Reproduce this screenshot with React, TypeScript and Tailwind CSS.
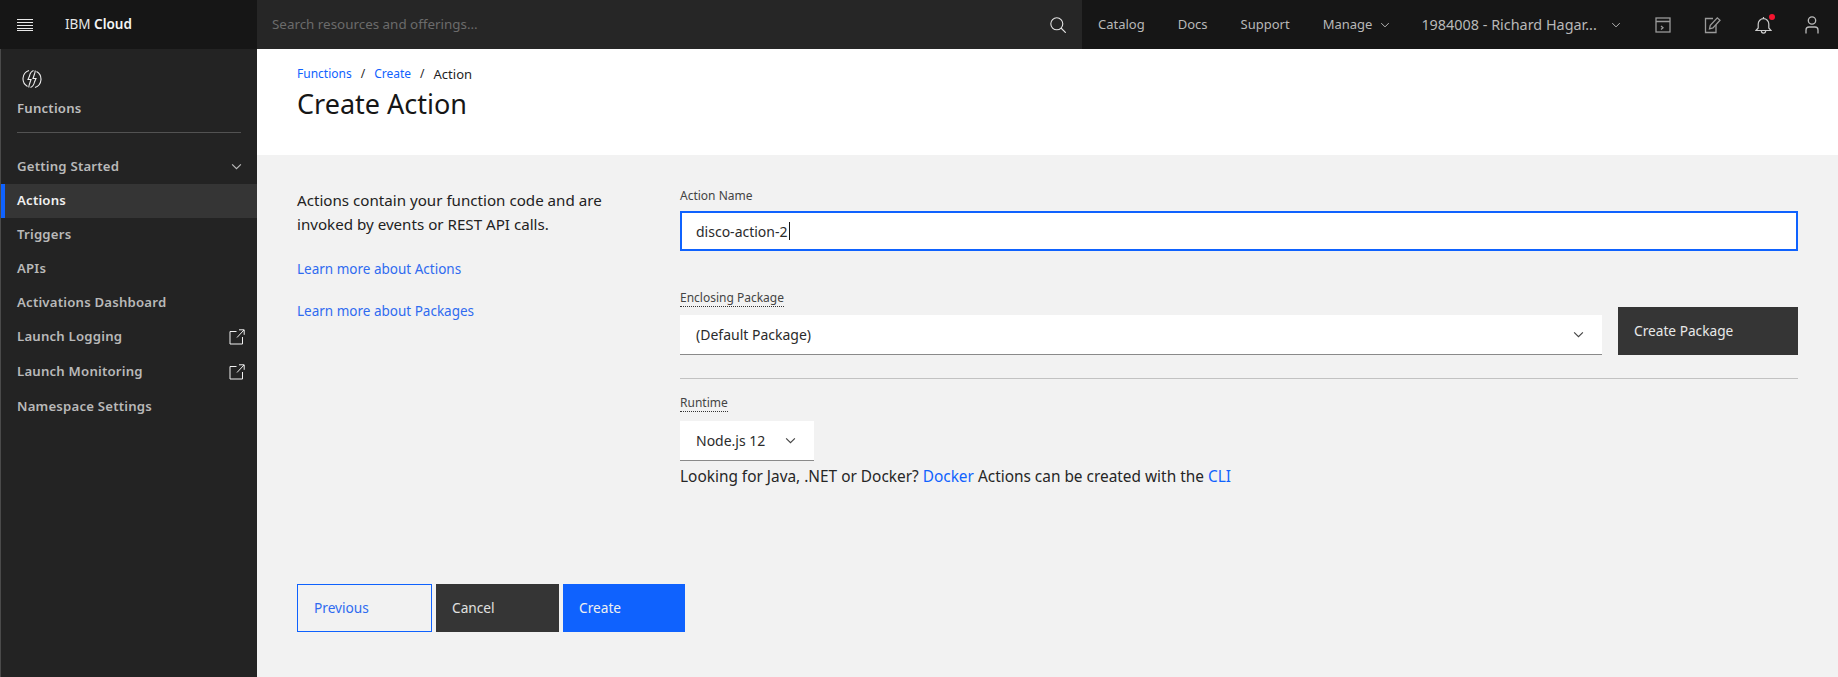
const font = "font-['Noto_Sans','Open_Sans',sans-serif]";

function Chevron({ className = "" }: { className?: string }) {
  return (
    <svg viewBox="0 0 12 8" fill="none" stroke="currentColor" strokeWidth="1.300" className={className}>
      <path d="M1 1.500l5 5 5-5" />
    </svg>
  );
}

function ExternalLink() {
  return (
    <svg viewBox="0 0 16 16" fill="none" stroke="#f0f0f0" strokeWidth="1" className="w-[16px] h-[16px]">
      <path d="M7.500 2.500h-6.500v12.500h12.500v-7" />
      <path d="M8 8.500l7-7.500M10 .8h5.200v5" />
    </svg>
  );
}

function FunctionsLogo() {
  return (
    <svg viewBox="0 0 20 20" fill="none" stroke="#eeeeee" strokeWidth="1.100" className="w-[20px] h-[20px]">
      <path d="M7 1.500A8.800 8.800 0 0 0 5.500 17.500" />
      <path d="M13 18.500A8.800 8.800 0 0 0 14.500 2.500" />
      <path d="M11.500 1.500C9 2.500 8 4.500 7.500 7L6 10.500h3L7.500 15c-.5 1.500-1 2.500-.5 3.500" />
      <path d="M13 1.500c.5 1 0 2-.5 3.500L11 9.500h3l-1.500 3.500c-.5 2.500-1.500 4.500-4 5.500" />
    </svg>
  );
}

function SideItem({ label, active, external, chevron }: { label: string; active?: boolean; external?: boolean; chevron?: boolean }) {
  return (
    <div
      className={`relative flex items-center justify-between pl-[16px] pr-[12px] text-[13.2px] font-semibold tracking-[0.2px] ${
        external ? "h-[35px]" : "h-[34px]"
      } ${active ? "bg-[#353535] text-[#f0f0f0]" : "text-[#b9b9b9]"}`}
    >
      {active && <span className="absolute left-0 top-0 bottom-0 w-[4px] bg-[#0f62fe]" />}
      <span>{label}</span>
      {chevron && <Chevron className="w-[11px] h-[7px] mr-[3px] text-[#bbbbbb]" />}
      {external && <ExternalLink />}
    </div>
  );
}

function Sidebar() {
  return (
    <aside className="w-[257px] shrink-0 bg-[#232323] border-l border-[#4a4a4a]">
      <div className="pl-[21px] pt-[20px]">
        <FunctionsLogo />
      </div>
      <div className="pl-[16px] mt-[10px] text-[13.2px] font-semibold tracking-[0.2px] text-[#bdbdbd]">Functions</div>
      <div className="ml-[16px] mr-[16px] mt-[13px] mb-[17px] h-px bg-[#525252]" />
      <SideItem label="Getting Started" chevron />
      <SideItem label="Actions" active />
      <SideItem label="Triggers" />
      <SideItem label="APIs" />
      <SideItem label="Activations Dashboard" />
      <SideItem label="Launch Logging" external />
      <SideItem label="Launch Monitoring" external />
      <SideItem label="Namespace Settings" />
    </aside>
  );
}

function TopBar() {
  return (
    <header className="h-[49px] shrink-0 flex bg-[#161616] text-[#b8b8b8] text-[13px]">
      <div className="w-[257px] shrink-0 flex items-center pl-[17px]">
        <svg viewBox="0 0 16 12" className="w-[16px] h-[12px]" fill="#e8e8e8">
          <rect width="16" height="1" />
          <rect y="3" width="16" height="1" />
          <rect y="6" width="16" height="1" />
          <rect y="9" width="16" height="1" />
          <rect y="11" width="16" height="1" />
        </svg>
        <span className="ml-[32px] text-[13.5px] text-[#e8e8e8]">
          IBM <span className="font-semibold text-[#f4f4f4]">Cloud</span>
        </span>
      </div>
      <div className="w-[825px] shrink-0 bg-[#262626] flex items-center justify-between pl-[15px] pr-[16px]">
        <span className="text-[13.4px] text-[#6b6b6b]">Search resources and offerings...</span>
        <svg viewBox="0 0 16 16" fill="none" stroke="#e4e4e4" strokeWidth="1.100" className="w-[16px] h-[16px]">
          <circle cx="6.800" cy="6.800" r="6" />
          <path d="M11 11l4.800 4.800" />
        </svg>
      </div>
      <nav className="flex-1 flex items-center">
        <span className="ml-[16px]">Catalog</span>
        <span className="ml-[33px]">Docs</span>
        <span className="ml-[33px]">Support</span>
        <span className="ml-[33px]">Manage</span>
        <Chevron className="ml-[8px] w-[10px] h-[6px]" />
        <span className="ml-[31px] w-[176px] whitespace-nowrap text-[14.400px]">1984008 - Richard Hagar...</span>
        <Chevron className="ml-[14px] w-[10px] h-[6px]" />
        <svg viewBox="0 0 16 16" fill="none" stroke="#9a9a9a" strokeWidth="1.300" className="ml-[34px] w-[16px] h-[16px]">
          <rect x="1" y="1" width="14" height="14" />
          <path d="M1 4.500h14M6 9l2 1.700-2 1.700" />
        </svg>
        <svg viewBox="0 0 18 18" fill="none" stroke="#9a9a9a" strokeWidth="1.300" className="ml-[33px] w-[18px] h-[18px]">
          <path d="M9 2.500H1.500v14h10.500V9" />
          <path d="M5.500 12.800l.8-3.400 7-7.600 2.700 2.500-7 7.600z" />
        </svg>
        <span className="relative ml-[33px] w-[17px] h-[18px]">
          <svg viewBox="0 0 17 18" fill="none" stroke="#cccccc" strokeWidth="1.200" className="w-[17px] h-[18px]">
            <path d="M1 14.500l2.200-2.500V8a5.300 5.300 0 0 1 10.600 0v4l2.200 2.500zM6.300 14.500c0 3.500 4.400 3.500 4.400 0M8.500 1v1.700" />
          </svg>
          <span className="absolute right-[-3px] top-[-2px] w-[6px] h-[6px] rounded-full bg-[#f5142f]" />
        </span>
        <svg viewBox="0 0 14 18" fill="none" stroke="#bbbbbb" strokeWidth="1.300" className="ml-[33px] w-[14px] h-[18px]">
          <circle cx="7" cy="4.500" r="3.700" />
          <path d="M1 17.500v-3.500a3 3 0 0 1 3-3h6a3 3 0 0 1 3 3v3.500" />
        </svg>
      </nav>
    </header>
  );
}

function DottedLabel({ children }: { children: React.ReactNode }) {
  return (
    <div className="flex h-[17px]">
      <span className="text-[12px] leading-[16px] text-[#444444] border-b border-dotted border-[#333333]">{children}</span>
    </div>
  );
}

function Button({ label, className }: { label: string; className: string }) {
  return <button className={`h-[48px] pl-[16px] text-left text-[13.7px] ${className}`}>{label}</button>;
}

export default function App() {
  return (
    <div className={`w-[1838px] h-[677px] flex flex-col overflow-hidden bg-[#f2f2f2] ${font}`}>
      <TopBar />
      <div className="flex-1 flex min-h-0">
        <Sidebar />
        <main className="flex-1 min-w-0">
          <div className="h-[106px] bg-white pl-[40px] pt-[16px]">
            <div className="flex items-center text-[12px] leading-[18px] text-[#1f1f1f]">
              <span className="text-[#0f62fe]">Functions</span>
              <span className="mx-[9px]">/</span>
              <span className="text-[#0f62fe]">Create</span>
              <span className="mx-[9px]">/</span>
              <span className="text-[13px]">Action</span>
            </div>
            <h1 className="mt-[3px] text-[27px] leading-[36px] text-[#161616]">Create Action</h1>
          </div>

          <div className="flex pl-[40px] pr-[40px] pt-[32px]">
            <div className="w-[383px] shrink-0 pt-[1px]">
              <p className="w-[320px] text-[15.150px] leading-[24px] text-[#222222]">
                Actions contain your function code and are invoked by events or REST API calls.
              </p>
              <p className="mt-[23px] text-[13.5px] leading-[20px] text-[#2f6bf0]">Learn more about Actions</p>
              <p className="mt-[22px] text-[13.5px] leading-[20px] text-[#2f6bf0]">Learn more about Packages</p>
            </div>

            <div className="flex-1 min-w-0">
              <div className="mt-[1px] text-[12px] leading-[16px] text-[#444444]">Action Name</div>
              <div className="mt-[7px] h-[40px] bg-white border-2 border-[#0f62fe] pl-[14px] flex items-center text-[14px] text-[#2b2b2b]">
                disco-action-2
                <span className="ml-px w-px h-[18px] bg-[#161616]" />
              </div>

              <div className="mt-[39px] flex items-end gap-[16px]">
                <div className="flex-1 min-w-0">
                  <DottedLabel>Enclosing Package</DottedLabel>
                  <div className="mt-[8px] h-[40px] bg-white border-b border-[#8a8a8a] pl-[16px] pr-[18px] flex items-center justify-between text-[14px] text-[#2b2b2b]">
                    (Default Package)
                    <Chevron className="w-[11px] h-[7px] text-[#444444]" />
                  </div>
                </div>
                <Button label="Create Package" className="w-[180px] bg-[#353535] text-[#e8e8e8]" />
              </div>

              <div className="mt-[23px] h-px bg-[#c2c2c2]" />

              <div className="mt-[16px]">
                <DottedLabel>Runtime</DottedLabel>
              </div>
              <div className="mt-[9px] w-[134px] h-[40px] bg-white border-b border-[#8a8a8a] pl-[16px] pr-[18px] flex items-center justify-between text-[14px] text-[#2b2b2b]">
                Node.js 12
                <Chevron className="w-[11px] h-[7px] text-[#444444]" />
              </div>
              <p className="mt-[5px] text-[15.400px] leading-[22px] text-[#262626]">
                Looking for Java, .NET or Docker? <span className="text-[#0f62fe]">Docker</span> Actions can be created with the{" "}
                <span className="text-[#0f62fe]">CLI</span>
              </p>
            </div>
          </div>

          <div className="flex gap-[4px] pl-[40px] mt-[96px]">
            <Button label="Previous" className="w-[135px] border border-[#0f62fe] text-[#2f6bf0]" />
            <Button label="Cancel" className="w-[123px] bg-[#353535] text-[#e0e0e0]" />
            <Button label="Create" className="w-[122px] bg-[#0f62fe] text-[#f0f0f0]" />
          </div>
        </main>
      </div>
    </div>
  );
}
